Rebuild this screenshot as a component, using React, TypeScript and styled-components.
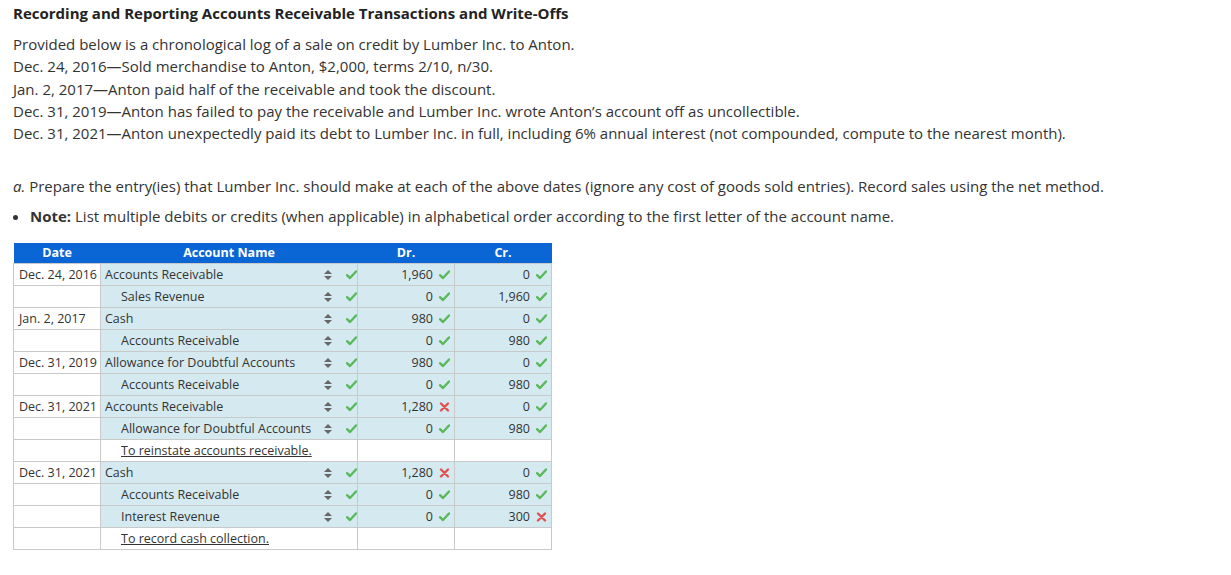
import React from "react";
import styled, { createGlobalStyle } from "styled-components";

const Global = createGlobalStyle`
  html, body { margin: 0; padding: 0; background: #fff; }
  body { font-family: "Open Sans", "Noto Sans", sans-serif; color: #333; }
`;

const Page = styled.div`
  padding: 3px 13px 20px 13px;
`;

const Title = styled.h1`
  margin: 0;
  font-size: 15px;
  line-height: 20px;
  font-weight: 700;
  color: #222;
`;

const Para = styled.div`
  margin-top: 10px;
  font-size: 15px;
  line-height: 22.25px;
`;

const Question = styled.div`
  margin-top: 31px;
  font-size: 15px;
  line-height: 22px;
`;

const Bullets = styled.ul`
  margin: 8px 0 0 0;
  padding: 0 0 0 17px;
  font-size: 15px;
  line-height: 22px;
`;

const Table = styled.table`
  margin-top: 16px;
  border-collapse: collapse;
  font-size: 12.5px;
  table-layout: fixed;
  width: 538px;
`;

const Th = styled.th`
  background: #0b66d5;
  color: #fff;
  font-weight: 700;
  height: 20px;
  padding: 0;
  text-align: center;
  line-height: 20px;
`;

const Td = styled.td<{ $blue?: boolean; $account?: boolean }>`
  border: 1px solid #c9c9c9;
  height: 21px;
  padding: ${(p) => (p.$account ? "0 0 0 4px" : "0 4px 0 5px")};
  background: ${(p) => (p.$blue ? "#d5eaf0" : "#fff")};
  line-height: 20px;
  white-space: nowrap;
  color: #333;
`;

const AccountBox = styled.div<{ $indent?: boolean }>`
  display: flex;
  align-items: center;
  padding-left: ${(p) => (p.$indent ? "16px" : "0")};
`;

const AccountText = styled.span`
  flex: 1;
  overflow: hidden;
`;

const SortIcon = styled.svg`
  width: 8px;
  height: 10px;
  margin-right: 14px;
  flex: none;
`;

const Mark = styled.svg`
  width: 11px;
  height: 10px;
  flex: none;
`;

const AmountBox = styled.div`
  display: flex;
  align-items: center;
  justify-content: flex-end;
  gap: 6px;
`;

const Memo = styled.span`
  padding-left: 16px;
  text-decoration: underline;
  color: #333;
`;

const Check = () => (
  <Mark viewBox="0 0 11 10">
    <path d="M1 5.2 L4 8 L10 1.5" fill="none" stroke="#5cb85c" strokeWidth="2.4" strokeLinecap="round" strokeLinejoin="round" />
  </Mark>
);

const Cross = () => (
  <Mark viewBox="0 0 11 10">
    <path d="M2 1.5 L9 8.5 M9 1.5 L2 8.5" fill="none" stroke="#e05252" strokeWidth="2.4" strokeLinecap="round" />
  </Mark>
);

const Sort = () => (
  <SortIcon viewBox="0 0 8 10">
    <path d="M4 0 L8 4 L0 4 Z" fill="#666" />
    <path d="M0 6 L8 6 L4 10 Z" fill="#666" />
  </SortIcon>
);

type Row =
  | { kind: "entry"; date?: string; account: string; credit?: boolean; dr: string; drOk: boolean; cr: string; crOk: boolean }
  | { kind: "memo"; text: string };

const rows: Row[] = [
  { kind: "entry", date: "Dec. 24, 2016", account: "Accounts Receivable", dr: "1,960", drOk: true, cr: "0", crOk: true },
  { kind: "entry", account: "Sales Revenue", credit: true, dr: "0", drOk: true, cr: "1,960", crOk: true },
  { kind: "entry", date: "Jan. 2, 2017", account: "Cash", dr: "980", drOk: true, cr: "0", crOk: true },
  { kind: "entry", account: "Accounts Receivable", credit: true, dr: "0", drOk: true, cr: "980", crOk: true },
  { kind: "entry", date: "Dec. 31, 2019", account: "Allowance for Doubtful Accounts", dr: "980", drOk: true, cr: "0", crOk: true },
  { kind: "entry", account: "Accounts Receivable", credit: true, dr: "0", drOk: true, cr: "980", crOk: true },
  { kind: "entry", date: "Dec. 31, 2021", account: "Accounts Receivable", dr: "1,280", drOk: false, cr: "0", crOk: true },
  { kind: "entry", account: "Allowance for Doubtful Accounts", credit: true, dr: "0", drOk: true, cr: "980", crOk: true },
  { kind: "memo", text: "To reinstate accounts receivable." },
  { kind: "entry", date: "Dec. 31, 2021", account: "Cash", dr: "1,280", drOk: false, cr: "0", crOk: true },
  { kind: "entry", account: "Accounts Receivable", credit: true, dr: "0", drOk: true, cr: "980", crOk: true },
  { kind: "entry", account: "Interest Revenue", credit: true, dr: "0", drOk: true, cr: "300", crOk: false },
  { kind: "memo", text: "To record cash collection." },
];

export default function App() {
  return (
    <Page>
      <Global />
      <Title>Recording and Reporting Accounts Receivable Transactions and Write-Offs</Title>
      <Para>
        Provided below is a chronological log of a sale on credit by Lumber Inc. to Anton.
        <br />
        Dec. 24, 2016—Sold merchandise to Anton, $2,000, terms 2/10, n/30.
        <br />
        Jan. 2, 2017—Anton paid half of the receivable and took the discount.
        <br />
        Dec. 31, 2019—Anton has failed to pay the receivable and Lumber Inc. wrote Anton’s account off as uncollectible.
        <br />
        Dec. 31, 2021—Anton unexpectedly paid its debt to Lumber Inc. in full, including 6% annual interest (not compounded, compute to the nearest month).
      </Para>
      <Question>
        <i>a.</i> Prepare the entry(ies) that Lumber Inc. should make at each of the above dates (ignore any cost of goods sold entries). Record sales using the net method.
      </Question>
      <Bullets>
        <li>
          <b>Note:</b> List multiple debits or credits (when applicable) in alphabetical order according to the first letter of the account name.
        </li>
      </Bullets>
      <Table>
        <colgroup>
          <col style={{ width: 87 }} />
          <col style={{ width: 257 }} />
          <col style={{ width: 97 }} />
          <col style={{ width: 97 }} />
        </colgroup>
        <thead>
          <tr>
            <Th>Date</Th>
            <Th>Account Name</Th>
            <Th>Dr.</Th>
            <Th>Cr.</Th>
          </tr>
        </thead>
        <tbody>
          {rows.map((r, i) =>
            r.kind === "memo" ? (
              <tr key={i}>
                <Td />
                <Td $account>
                  <Memo>{r.text}</Memo>
                </Td>
                <Td />
                <Td />
              </tr>
            ) : (
              <tr key={i}>
                <Td>{r.date ?? ""}</Td>
                <Td $blue $account>
                  <AccountBox $indent={r.credit}>
                    <AccountText>{r.account}</AccountText>
                    <Sort />
                    <Check />
                  </AccountBox>
                </Td>
                <Td $blue>
                  <AmountBox>
                    <span>{r.dr}</span>
                    {r.drOk ? <Check /> : <Cross />}
                  </AmountBox>
                </Td>
                <Td $blue>
                  <AmountBox>
                    <span>{r.cr}</span>
                    {r.crOk ? <Check /> : <Cross />}
                  </AmountBox>
                </Td>
              </tr>
            )
          )}
        </tbody>
      </Table>
    </Page>
  );
}
